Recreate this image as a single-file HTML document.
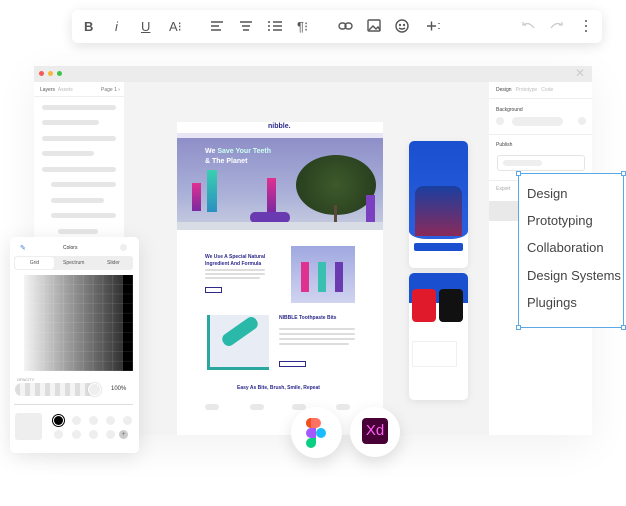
<!DOCTYPE html><html><head><style>
*{margin:0;padding:0;box-sizing:border-box}
body{width:626px;height:506px;background:#fff;position:relative;overflow:hidden;font-family:"Liberation Sans",sans-serif}
.a{position:absolute}
.bar{position:absolute;height:5px;border-radius:3px;background:#e6e6e6}
.tb{color:#555;font-size:13px;position:absolute;top:19px}
.sel{font-size:13px;color:#444;position:absolute;left:527px}
</style></head><body>
<!-- toolbar -->
<div class="a" style="left:72px;top:10px;width:530px;height:33px;background:#fff;border-radius:6px;box-shadow:0 3px 12px rgba(0,0,0,.12)"></div>
<div class="tb" style="left:84px;font-weight:bold">B</div>
<div class="tb" style="left:115px;font-style:italic">i</div>
<div class="tb" style="left:141px;text-decoration:underline">U</div>
<div class="tb" style="left:169px">A⁝</div>
<svg class="a" style="left:208px;top:18px" width="240" height="16" stroke="#555" stroke-width="1.4" fill="none">
<path d="M3 4h12M3 8h8M3 12h10"/><path d="M32 4h12M34 8h8M35 12h6"/><path d="M65 4h9M65 8h9M65 12h9M60 4h2M60 8h2M60 12h2"/>
<text x="89" y="13" font-size="13" fill="#555" stroke="none">¶⁝</text>
<rect x="131" y="5" width="7" height="6" rx="3"/><rect x="137" y="5" width="7" height="6" rx="3"/>
<rect x="160" y="2" width="12" height="11" rx="1"/><path d="M161 12l4-4 3 3 2-2 2 3"/>
<circle cx="194" cy="8" r="6"/><circle cx="192" cy="7" r=".5"/><circle cx="196" cy="7" r=".5"/><path d="M191 10q3 2 6 0"/>
<path d="M219 8h9M223.5 3.5v9M231 5v1M231 10v1"/></svg>
<svg class="a" style="left:518px;top:18px" width="80" height="16" stroke="#ccc" stroke-width="1.3" fill="none"><path d="M5 7q6-4 11 3M5 4v3h3"/><path d="M44 7q-6-4-11 3M44 4v3h-3"/><circle cx="68" cy="3" r="1" fill="#555" stroke="none"/><circle cx="68" cy="8" r="1" fill="#555" stroke="none"/><circle cx="68" cy="13" r="1" fill="#555" stroke="none"/></svg>

<!-- window -->
<div class="a" style="left:34px;top:66px;width:558px;height:369px;background:#f3f3f3;box-shadow:0 10px 40px rgba(0,0,0,.06)"></div>
<div class="a" style="left:34px;top:66px;width:558px;height:16px;background:#ececec"></div>
<div class="a" style="left:39px;top:71px;width:5px;height:5px;border-radius:50%;background:#f25c54"></div>
<div class="a" style="left:48px;top:71px;width:5px;height:5px;border-radius:50%;background:#f6b73c"></div>
<div class="a" style="left:57px;top:71px;width:5px;height:5px;border-radius:50%;background:#3fc24a"></div>
<div class="a" style="left:575px;top:66px;color:#ccc;font-size:12px">✕</div>
<!-- left panel -->
<div class="a" style="left:34px;top:82px;width:90px;height:353px;background:#fff"></div>
<div class="a" style="left:40px;top:87px;font-size:5px;color:#555">Layers <span style="color:#bbb">&nbsp;Assets</span></div>
<div class="a" style="left:101px;top:87px;font-size:5px;color:#777">Page 1 ›</div>
<div class="a" style="left:34px;top:96px;width:90px;height:1px;background:#eee"></div>
<div class="bar" style="left:42px;top:105px;width:74px"></div>
<div class="bar" style="left:42px;top:120px;width:57px"></div>
<div class="bar" style="left:42px;top:136px;width:74px"></div>
<div class="bar" style="left:42px;top:151px;width:52px"></div>
<div class="bar" style="left:42px;top:167px;width:74px"></div>
<div class="bar" style="left:51px;top:182px;width:65px"></div>
<div class="bar" style="left:51px;top:198px;width:53px"></div>
<div class="bar" style="left:51px;top:213px;width:65px"></div>
<div class="bar" style="left:58px;top:229px;width:40px"></div>
<!-- right panel -->
<div class="a" style="left:489px;top:82px;width:103px;height:353px;background:#fff"></div>
<div class="a" style="left:496px;top:87px;font-size:5px;color:#444">Design <span style="color:#bbb">&nbsp;&nbsp;Prototype &nbsp;&nbsp;Code</span></div>
<div class="a" style="left:489px;top:98px;width:103px;height:1px;background:#eee"></div>
<div class="a" style="left:496px;top:107px;font-size:5px;color:#444">Background</div>
<div class="a" style="left:496px;top:117px;width:8px;height:8px;border-radius:50%;background:#eee"></div>
<div class="a" style="left:512px;top:117px;width:51px;height:9px;border-radius:5px;background:#eee"></div>
<div class="a" style="left:578px;top:117px;width:8px;height:8px;border-radius:50%;background:#eee"></div>
<div class="a" style="left:489px;top:134px;width:103px;height:1px;background:#eee"></div>
<div class="a" style="left:496px;top:142px;font-size:5px;color:#444">Publish</div>
<div class="a" style="left:497px;top:155px;width:88px;height:16px;border:1px solid #e4e4e4;border-radius:3px"></div>
<div class="a" style="left:503px;top:160px;width:39px;height:6px;border-radius:3px;background:#eee"></div>
<div class="a" style="left:489px;top:180px;width:103px;height:1px;background:#eee"></div>
<div class="a" style="left:496px;top:186px;font-size:5px;color:#aaa">Export</div>
<div class="a" style="left:489px;top:201px;width:103px;height:20px;background:#e9e9e9"></div>

<!-- web page -->
<div class="a" style="left:177px;top:122px;width:206px;height:313px;background:#fff"></div>
<div class="a" style="left:268px;top:123px;font-size:7px;font-weight:bold;color:#2d2a8a">nibble.</div>
<div class="a" style="left:177px;top:133px;width:206px;height:5px;background:#e8e6f5"></div>
<div class="a" style="left:177px;top:138px;width:206px;height:92px;background:linear-gradient(180deg,#8e8fc8,#aab0d8 60%,#c8cde0)"></div>
<div class="a" style="left:205px;top:147px;font-size:7px;font-weight:bold;color:#fff;line-height:10px">We <span style="color:#cfe">Save Your Teeth</span><br>&amp; The Planet</div>
<div class="a" style="left:296px;top:155px;width:80px;height:60px;border-radius:50%;background:radial-gradient(circle,#3d5a2a,#24381c)"></div>
<div class="a" style="left:334px;top:205px;width:3px;height:20px;background:#5a4a3a"></div>
<div class="a" style="left:192px;top:183px;width:9px;height:28px;background:linear-gradient(#e03090,#7a2aa0)"></div>
<div class="a" style="left:207px;top:170px;width:10px;height:42px;background:linear-gradient(#3ad0b0,#2a90c0)"></div>
<div class="a" style="left:267px;top:178px;width:9px;height:34px;background:linear-gradient(#e03090,#7a2aa0)"></div>
<div class="a" style="left:250px;top:212px;width:40px;height:11px;border-radius:5px;background:#6a3ab0"></div>
<div class="a" style="left:366px;top:195px;width:9px;height:32px;background:#7a40c0"></div>
<div class="a" style="left:177px;top:222px;width:206px;height:8px;background:#d8dce4"></div>
<div class="a" style="left:205px;top:254px;font-size:5px;font-weight:bold;color:#2d2a8a;line-height:7px">We Use A Special Natural<br>Ingredient And Formula</div>
<div class="bar" style="left:205px;top:269px;width:60px;height:2px;background:#ddd"></div>
<div class="bar" style="left:205px;top:273px;width:60px;height:2px;background:#ddd"></div>
<div class="bar" style="left:205px;top:277px;width:55px;height:2px;background:#ddd"></div>
<div class="a" style="left:205px;top:287px;width:17px;height:6px;border:1px solid #2d2a8a"></div>
<div class="a" style="left:291px;top:246px;width:64px;height:57px;background:linear-gradient(#a0a8e0,#d0d4f0)"></div>
<div class="a" style="left:301px;top:262px;width:8px;height:30px;background:#e03090"></div>
<div class="a" style="left:318px;top:262px;width:8px;height:30px;background:#3ac0b0"></div>
<div class="a" style="left:335px;top:262px;width:8px;height:30px;background:#6a3ab0"></div>
<div class="a" style="left:207px;top:315px;width:62px;height:55px;background:#e8ecf4;border-left:3px solid #2aa8a0;border-bottom:3px solid #2aa8a0"></div>
<div class="a" style="left:220px;top:325px;width:40px;height:13px;border-radius:6px;background:#2ab8a8;transform:rotate(-35deg)"></div>
<div class="a" style="left:279px;top:315px;font-size:5px;font-weight:bold;color:#2d2a8a">NIBBLE Toothpaste Bits</div>
<div class="bar" style="left:279px;top:328px;width:76px;height:2px;background:#ddd"></div>
<div class="bar" style="left:279px;top:333px;width:76px;height:2px;background:#ddd"></div>
<div class="bar" style="left:279px;top:338px;width:76px;height:2px;background:#ddd"></div>
<div class="bar" style="left:279px;top:343px;width:70px;height:2px;background:#ddd"></div>
<div class="a" style="left:279px;top:361px;width:27px;height:6px;border:1px solid #2d2a8a"></div>
<div class="a" style="left:237px;top:385px;font-size:5px;font-weight:bold;color:#2d2a8a">Easy As Bite, Brush, Smile, Repeat</div>
<div class="bar" style="left:205px;top:404px;width:14px;height:6px;background:#e8e8e8"></div>
<div class="bar" style="left:250px;top:404px;width:14px;height:6px;background:#e8e8e8"></div>
<div class="bar" style="left:292px;top:404px;width:14px;height:6px;background:#e8e8e8"></div>
<div class="bar" style="left:336px;top:404px;width:14px;height:6px;background:#e8e8e8"></div>

<!-- phones -->
<div class="a" style="left:409px;top:141px;width:59px;height:127px;background:#fff;border-radius:5px;box-shadow:0 2px 8px rgba(0,0,0,.08);overflow:hidden">
<div style="height:98px;background:linear-gradient(#1a4fd0,#2a60e0);border-radius:0 0 30% 30%/0 0 8px 8px"></div>
<div style="position:absolute;left:6px;top:45px;width:47px;height:50px;background:linear-gradient(#1a3fa0,#8a2a5a);border-radius:8px 8px 0 0"></div>
<div style="position:absolute;left:5px;top:102px;width:49px;height:8px;background:#1a4fd0;border-radius:2px"></div></div>
<div class="a" style="left:409px;top:273px;width:59px;height:127px;background:#fff;border-radius:5px;box-shadow:0 2px 8px rgba(0,0,0,.08);overflow:hidden">
<div style="height:30px;background:#1a4fd0"></div>
<div style="position:absolute;left:3px;top:16px;width:24px;height:33px;background:#e01a2a;border-radius:4px"></div>
<div style="position:absolute;left:30px;top:16px;width:24px;height:33px;background:#111;border-radius:4px"></div>
<div style="position:absolute;left:3px;top:68px;width:45px;height:26px;border:1px solid #f0f0f0"></div></div>

<!-- selection box -->
<div class="a" style="left:518px;top:173px;width:106px;height:155px;background:#fff;border:1px solid #5aa8e6"></div>
<div class="a" style="left:516px;top:171px;width:5px;height:5px;border:1px solid #5aa8e6;background:#fff"></div>
<div class="a" style="left:621px;top:171px;width:5px;height:5px;border:1px solid #5aa8e6;background:#fff"></div>
<div class="a" style="left:516px;top:325px;width:5px;height:5px;border:1px solid #5aa8e6;background:#fff"></div>
<div class="a" style="left:621px;top:325px;width:5px;height:5px;border:1px solid #5aa8e6;background:#fff"></div>
<div class="sel" style="top:186px">Design</div>
<div class="sel" style="top:213px">Prototyping</div>
<div class="sel" style="top:240px">Collaboration</div>
<div class="sel" style="top:268px">Design Systems</div>
<div class="sel" style="top:295px">Plugings</div>

<!-- colors panel -->
<div class="a" style="left:10px;top:237px;width:129px;height:216px;background:#fff;border-radius:5px;box-shadow:0 4px 20px rgba(0,0,0,.1)"></div>
<div class="a" style="left:20px;top:244px;color:#3a7bd5;font-size:7px">✎</div>
<div class="a" style="left:63px;top:245px;font-size:5px;color:#333">Colors</div>
<div class="a" style="left:120px;top:244px;width:7px;height:7px;border-radius:50%;background:#eee"></div>
<div class="a" style="left:14px;top:256px;width:119px;height:14px;background:#eee;border-radius:3px"></div>
<div class="a" style="left:15px;top:257px;width:39px;height:12px;background:#fff;border-radius:3px;font-size:5px;text-align:center;line-height:12px;color:#555">Grid</div>
<div class="a" style="left:63px;top:260px;font-size:5px;color:#555">Spectrum</div>
<div class="a" style="left:107px;top:260px;font-size:5px;color:#555">Slider</div>
<div class="a" style="left:24px;top:275px;width:109px;height:96px;display:grid;grid-template-columns:repeat(11,1fr);grid-template-rows:repeat(10,1fr);gap:0.5px;background:#eee">
</div>
<svg class="a" style="left:24px;top:275px" width="109" height="96"><defs><linearGradient id="g"><stop offset="0" stop-color="#f4f4f4"/><stop offset=".9" stop-color="#333"/><stop offset=".91" stop-color="#000"/></linearGradient><pattern id="p" width="9.9" height="9.6" patternUnits="userSpaceOnUse"><path d="M9.9 0V9.6H0" stroke="#fff" stroke-opacity=".35" fill="none" stroke-width=".6"/></pattern></defs><rect width="109" height="96" fill="url(#g)"/><rect width="109" height="96" fill="url(#p)"/></svg>
<div class="a" style="left:17px;top:377px;font-size:4px;color:#999">OPACITY</div>
<div class="a" style="left:15px;top:383px;width:85px;height:13px;border-radius:7px;background:repeating-linear-gradient(90deg,#ddd 0 5px,#f4f4f4 5px 10px)"></div>
<div class="a" style="left:88px;top:383px;width:13px;height:13px;border-radius:50%;background:#eee;border:1px solid #fff;box-shadow:0 0 2px #bbb"></div>
<div class="a" style="left:111px;top:386px;font-size:6px;color:#333">100%</div>
<div class="a" style="left:14px;top:404px;width:119px;height:1px;background:#ddd"></div>
<div class="a" style="left:15px;top:413px;width:27px;height:27px;border-radius:3px;background:#eee"></div>
<div class="a" style="left:54px;top:416px;width:9px;height:9px;border-radius:50%;background:#000;box-shadow:0 0 0 1px #fff,0 0 0 2px #000"></div>
<div class="a" style="left:72px;top:416px;width:9px;height:9px;border-radius:50%;background:#eee"></div>
<div class="a" style="left:89px;top:416px;width:9px;height:9px;border-radius:50%;background:#eee"></div>
<div class="a" style="left:106px;top:416px;width:9px;height:9px;border-radius:50%;background:#eee"></div>
<div class="a" style="left:123px;top:416px;width:9px;height:9px;border-radius:50%;background:#eee"></div>
<div class="a" style="left:54px;top:430px;width:9px;height:9px;border-radius:50%;background:#eee"></div>
<div class="a" style="left:72px;top:430px;width:9px;height:9px;border-radius:50%;background:#eee"></div>
<div class="a" style="left:89px;top:430px;width:9px;height:9px;border-radius:50%;background:#eee"></div>
<div class="a" style="left:106px;top:430px;width:9px;height:9px;border-radius:50%;background:#eee"></div>
<div class="a" style="left:119px;top:430px;width:9px;height:9px;border-radius:50%;background:#ccc;font-size:7px;color:#777;text-align:center;line-height:9px">+</div>

<!-- app icons -->
<div class="a" style="left:291px;top:407px;width:51px;height:51px;border-radius:50%;background:#fff;box-shadow:0 6px 16px rgba(0,0,0,.12)"></div>
<svg class="a" style="left:306px;top:418px" width="20" height="30"><rect x="0" y="0" width="10" height="10" rx="5" fill="#f24e1e"/><rect x="5" y="0" width="10" height="10" rx="5" fill="#ff7262"/><rect x="0" y="0" width="10" height="10" rx="5" fill="#f24e1e"/><rect x="0" y="10" width="10" height="10" rx="5" fill="#a259ff"/><circle cx="15" cy="15" r="5" fill="#1abcfe"/><path d="M5 20h5v5a5 5 0 1 1-5-5z" fill="#0acf83"/><rect x="5" y="10" width="5" height="10" fill="#a259ff"/><rect x="5" y="0" width="5" height="10" fill="#ff7262"/></svg>
<div class="a" style="left:350px;top:407px;width:50px;height:50px;border-radius:50%;background:#fff;box-shadow:0 6px 16px rgba(0,0,0,.12)"></div>
<div class="a" style="left:362px;top:418px;width:26px;height:26px;border-radius:4px;background:#470137;color:#ff61f6;font-size:15px;text-align:center;line-height:26px">Xd</div>
</body></html>
